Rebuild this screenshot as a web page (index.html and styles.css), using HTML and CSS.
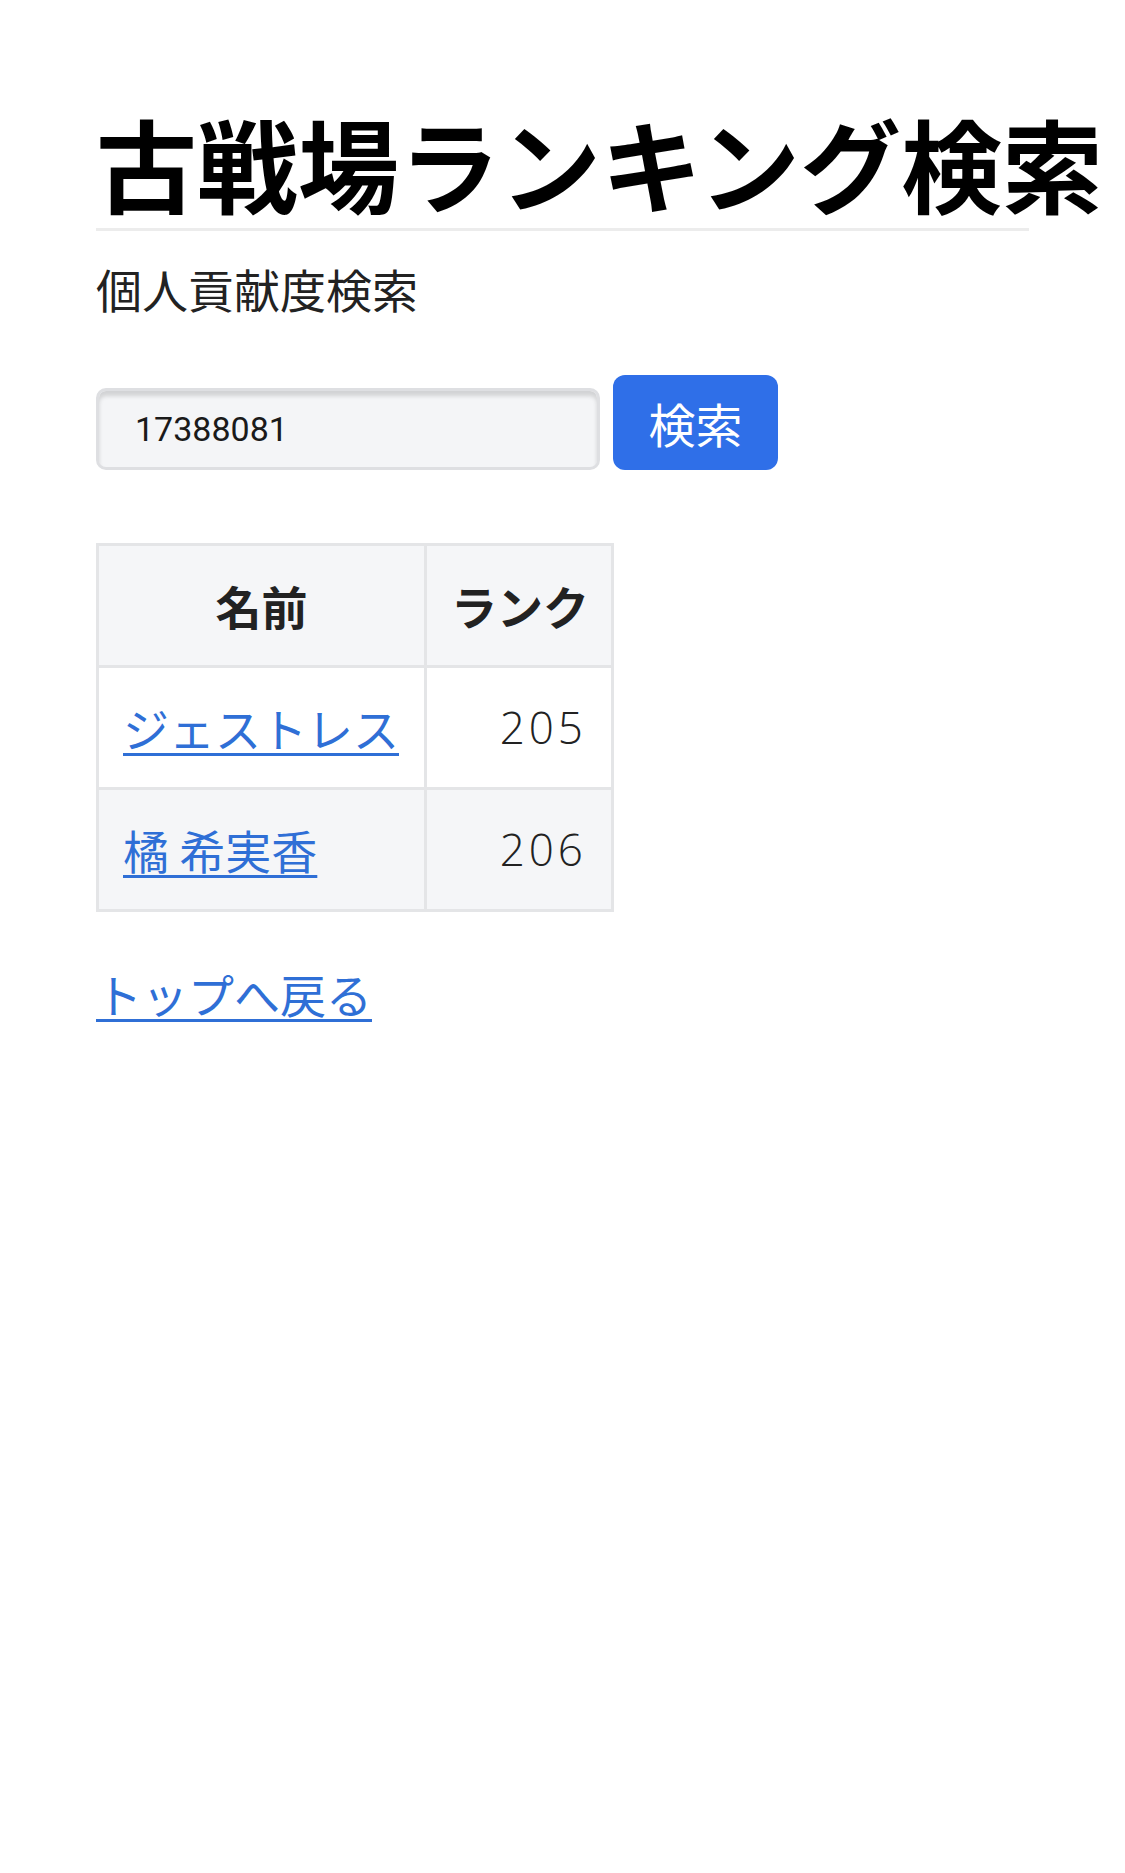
FILE: index.html
```html
<!DOCTYPE html>
<html lang="ja">
<head>
<meta charset="utf-8">
<title>古戦場ランキング検索</title>
<link rel="stylesheet" href="styles.css">
</head>
<body>
<main class="page">
  <h1 class="title">古戦場ランキング検索</h1>
  <p class="subtitle">個人貢献度検索</p>
  <form class="search">
    <input class="search-input" type="text" value="17388081">
    <button class="search-btn" type="button">検索</button>
  </form>
  <table class="rank-table">
    <colgroup>
      <col class="col-name">
      <col class="col-rank">
    </colgroup>
    <thead>
      <tr><th>名前</th><th>ランク</th></tr>
    </thead>
    <tbody>
      <tr><td class="cell-name"><a class="name-link" href="#">ジェストレス</a></td><td class="cell-rank">205</td></tr>
      <tr><td class="cell-name"><a class="name-link" href="#">橘 希実香</a></td><td class="cell-rank">206</td></tr>
    </tbody>
  </table>
  <p class="back"><a class="back-link" href="#">トップへ戻る</a></p>
</main>
</body>
</html>
```
FILE: styles.css
```css
html, body {
  margin: 0;
  padding: 0;
  background: #ffffff;
}
body {
  font-family: "Noto Sans CJK JP", "Noto Sans", sans-serif;
  font-size: 46px;
  line-height: 72px;
  color: #222222;
}
.page {
  width: 933px;
  padding: 102px 96px 0;
}
.title {
  margin: 0;
  padding-bottom: 6px;
  font-size: 101px;
  line-height: 120px;
  font-weight: 700;
  color: #000000;
  white-space: nowrap;
  border-bottom: 3px solid #ececec;
}
.subtitle {
  margin: 21px 0 0;
  font-weight: 400;
  color: #222222;
}
.search {
  display: flex;
  align-items: flex-end;
  gap: 13px;
  margin-top: 51px;
}
.search-input {
  box-sizing: border-box;
  width: 504px;
  height: 82px;
  margin: 0;
  padding: 0 36px;
  border: 3px solid #dedfe2;
  border-radius: 10px;
  background: #f4f5f7;
  box-shadow: inset 0 5px 4px rgba(0, 0, 0, 0.14);
  font-family: Roboto, "Liberation Sans", sans-serif;
  font-size: 34px;
  color: #1a1a1a;
  outline: none;
}
.search-btn {
  box-sizing: border-box;
  width: 165px;
  height: 95px;
  margin: 0;
  padding: 0;
  border: 0;
  border-radius: 12px;
  background: #2f6fe8;
  color: #ffffff;
  font-family: "Noto Sans CJK JP", sans-serif;
  font-size: 47px;
  line-height: 72px;
}
.rank-table {
  margin-top: 73px;
  border-collapse: collapse;
  table-layout: fixed;
  width: 515px;
  border: 3px solid #e4e5e7;
}
.col-name { width: 328px; }
.col-rank { width: 187px; }
.rank-table th,
.rank-table td {
  border: 3px solid #e4e5e7;
  padding: 24px;
  line-height: 71px;
  white-space: nowrap;
}
.rank-table thead tr {
  background: #f5f6f8;
}
.rank-table th {
  text-align: center;
  font-weight: 700;
  color: #222222;
}
.rank-table tbody tr:nth-child(odd) {
  background: #ffffff;
}
.rank-table tbody tr:nth-child(even) {
  background: #f5f6f8;
}
.cell-name {
  text-align: left;
}
.cell-rank {
  text-align: right;
  padding-right: 20px;
  color: #222222;
  font-family: "Open Sans", "Noto Sans CJK JP", sans-serif;
  font-weight: 300;
  font-size: 44px;
  letter-spacing: 4px;
}
.name-link,
.back-link {
  color: #2f6fd6;
  text-decoration: underline;
  text-decoration-thickness: 3px;
  text-underline-offset: 6px;
}
.back {
  margin: 45px 0 0;
}
```
